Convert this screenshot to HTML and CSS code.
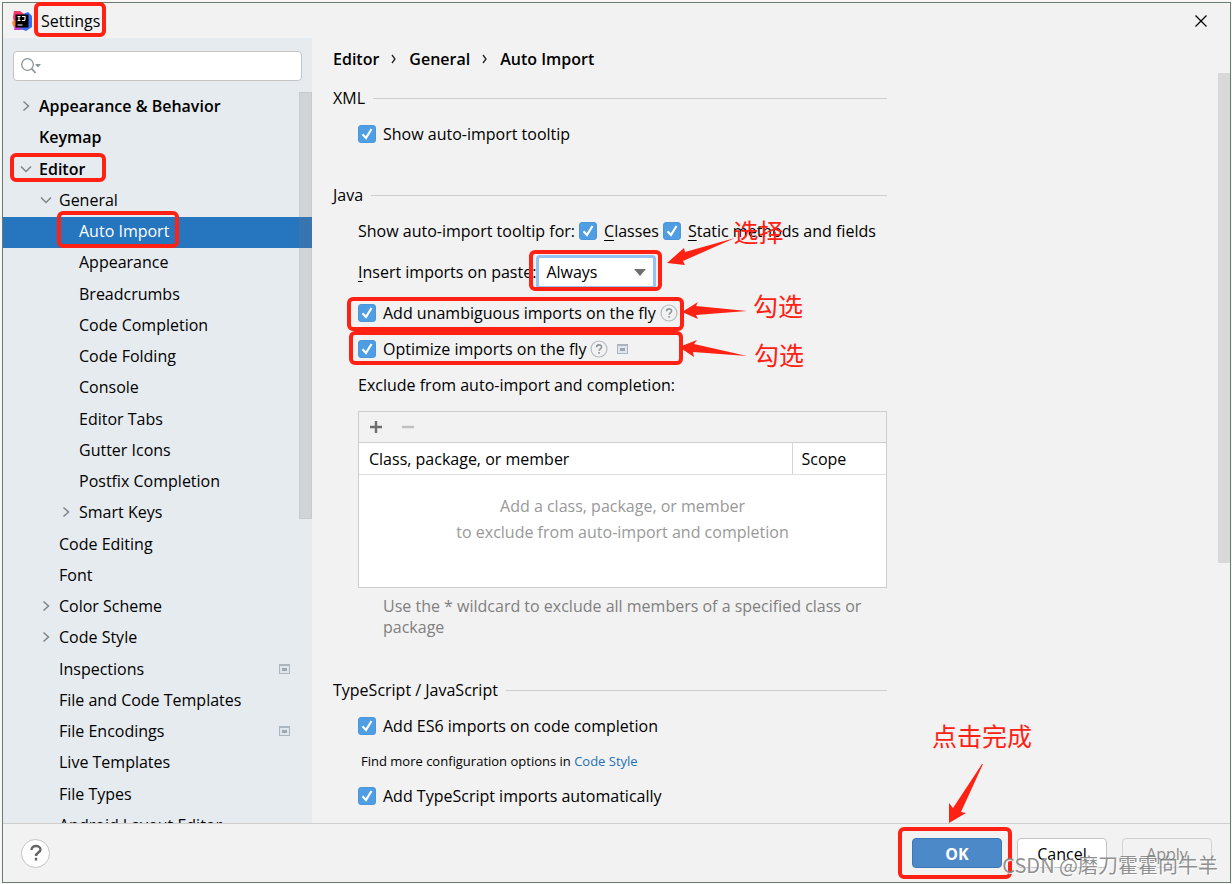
FILE: index.html
```html
<!DOCTYPE html>
<html lang="en">
<head>
    <meta charset="UTF-8">
    <title>Settings</title>
    <link rel="stylesheet" href="styles.css">
</head>

<body>

    <!-- shared icons -->
    <svg class="sprite" aria-hidden="true">
        <symbol id="right" viewBox="0 0 12 12"><path d="M3.500 1.500 8.500 6 3.500 10.500" fill="none" stroke="#7f8488" stroke-width="1.500"/></symbol>
        <symbol id="down" viewBox="0 0 12 12"><path d="M1 3.500 6 8.500 11 3.500" fill="none" stroke="#7f8488" stroke-width="1.500"/></symbol>
        <symbol id="project" viewBox="0 0 11 10"><path d="M0 0h11v10H0z" fill="#aab5bd"/><path d="M1 2h9v7H1z" fill="#dfe5ea"/><path d="M3 4h5v3H3z" fill="#9ba8b1"/></symbol>
        <symbol id="help" viewBox="0 0 18 18"><circle cx="9" cy="9" r="8" fill="none" stroke="#b3bbc0" stroke-width="1.200"/><path d="M6.600 7.200c0-3.200 5-3 5-.2 0 1.800-2.500 1.900-2.500 3.700M9.100 12v1.700" fill="none" stroke="#8f979c" stroke-width="1.600"/></symbol>
    </svg>

    <div class="dialog">
        <header class="titlebar">
            <svg class="logo" viewBox="0 0 20 20">
                <path d="M2 0h6l4 3-2 8-8 2-1-7z" fill="#fc3765"/>
                <path d="m0 11 5-3 3 8-4 2-3-3z" fill="#f98833"/>
                <path d="m3 14 7-3 3 7-5 1-6 0z" fill="#c13fd0"/>
                <path d="m11 3 5-2 4 4v11l-6 4-5-2 2-8z" fill="#3b6cf0"/>
                <path d="M3.500 3.500h13v13h-13z" fill="#000"/>
                <path d="M5.500 5.500h3M7 5.500v4M5.500 9.500h3M10 5.500h3v3q0 1-1.500 1H10M5.500 14h5" fill="none" stroke="#fff" stroke-width="1.100"/>
            </svg>
            <h1 class="title">Settings<span class="ring ring-title"></span></h1>
            <button class="close" aria-label="Close"><svg viewBox="0 0 12 12"><path d="M.5.5l11 11M11.500.5l-11 11" stroke="#000" stroke-width="1.300"/></svg></button>
        </header>

        <div class="body">
            <!-- settings tree -->
            <nav class="sidebar">
                <div class="search">
                    <svg viewBox="0 0 22 18"><circle cx="6.500" cy="7.500" r="5.800" fill="none" stroke="#8a959c" stroke-width="1.300"/><path d="m10.500 11.500 4 4.500" stroke="#8a959c" stroke-width="1.800"/><path d="M14 7h6l-3 3.500z" fill="#8a959c"/></svg>
                    <input type="text" aria-label="Search settings">
                </div>
                <ul class="tree">
                    <li class="top"><svg class="arrow"><use href="#right"/></svg>Appearance &amp; Behavior</li>
                    <li class="top">Keymap</li>
                    <li class="top"><svg class="arrow"><use href="#down"/></svg>Editor<span class="ring ring-editor"></span></li>
                    <li class="mid"><svg class="arrow"><use href="#down"/></svg>General</li>
                    <li class="low selected">Auto Import<span class="ring ring-auto"></span></li>
                    <li class="low">Appearance</li>
                    <li class="low">Breadcrumbs</li>
                    <li class="low">Code Completion</li>
                    <li class="low">Code Folding</li>
                    <li class="low">Console</li>
                    <li class="low">Editor Tabs</li>
                    <li class="low">Gutter Icons</li>
                    <li class="low">Postfix Completion</li>
                    <li class="low"><svg class="arrow"><use href="#right"/></svg>Smart Keys</li>
                    <li class="mid">Code Editing</li>
                    <li class="mid">Font</li>
                    <li class="mid"><svg class="arrow"><use href="#right"/></svg>Color Scheme</li>
                    <li class="mid"><svg class="arrow"><use href="#right"/></svg>Code Style</li>
                    <li class="mid">Inspections<svg class="project"><use href="#project"/></svg></li>
                    <li class="mid">File and Code Templates</li>
                    <li class="mid">File Encodings<svg class="project"><use href="#project"/></svg></li>
                    <li class="mid">Live Templates</li>
                    <li class="mid">File Types</li>
                    <li class="mid">Android Layout Editor</li>
                </ul>
                <div class="scroll scroll-tree"></div>
            </nav>

            <!-- page content -->
            <main class="content">
                <div class="crumbs">
                    <span>Editor</span><svg viewBox="0 0 6 10"><path d="m1 1 3 4-3 4" fill="none" stroke="#222" stroke-width="1.300"/></svg>
                    <span>General</span><svg viewBox="0 0 6 10"><path d="m1 1 3 4-3 4" fill="none" stroke="#222" stroke-width="1.300"/></svg>
                    <span>Auto Import</span>
                </div>

                <section>
                    <h2>XML</h2>
                    <div class="row"><label><input type="checkbox" checked>Show auto-import tooltip</label></div>
                </section>

                <section>
                    <h2>Java</h2>
                    <div class="row row-tight">
                        <span>Show auto-import tooltip for:</span>
                        <label><input type="checkbox" checked><span><u>C</u>lasses</span></label>
                        <label><input type="checkbox" checked><span><u>S</u>tatic methods and fields</span></label>
                    </div>
                    <div class="row row-select">
                        <label for="paste"><span><u>I</u>nsert imports on paste:</span></label>
                        <div class="select">
                            <select id="paste">
                                <option>Always</option>
                                <option>Ask</option>
                                <option>Never</option>
                            </select>
                            <svg class="caret" viewBox="0 0 12 7"><path d="M0 0h12L6 7z" fill="#6e6e6e"/></svg>
                            <span class="ring ring-select"></span>
                            <svg class="pointer pointer-select" viewBox="0 0 70 32"><path d="M69 2 19 16l-1-4L1 27l18 2-2-4z"/></svg>
                            <span class="note note-select">选择</span>
                        </div>
                    </div>
                    <div class="row row-tight">
                        <label><input type="checkbox" checked>Add unambiguous imports on the fly</label>
                        <svg class="help"><use href="#help"/></svg>
                        <span class="ring ring-add"></span>
                        <svg class="pointer pointer-add" viewBox="0 0 68 20"><path d="M66 10 15 5l2-4L1 11l16 7-2-4z"/></svg>
                        <span class="note note-add">勾选</span>
                    </div>
                    <div class="row row-tight">
                        <label><input type="checkbox" checked>Optimize imports on the fly</label>
                        <svg class="help"><use href="#help"/></svg>
                        <svg class="project"><use href="#project"/></svg>
                        <span class="ring ring-optimize"></span>
                        <svg class="pointer pointer-optimize" viewBox="0 0 70 20"><path d="M69 17 16 5l3-4L1 8l15 10-1-5z"/></svg>
                        <span class="note note-optimize">勾选</span>
                    </div>
                    <div class="row">Exclude from auto-import and completion:</div>

                    <div class="exclude">
                        <div class="toolbar">
                            <button aria-label="Add"><svg viewBox="0 0 14 14"><path d="M7 1v12M1 7h12" stroke="#6e6e6e" stroke-width="2.400"/></svg></button>
                            <button aria-label="Remove" disabled><svg viewBox="0 0 14 14"><path d="M1 7h12" stroke="#c0c0c0" stroke-width="2.400"/></svg></button>
                        </div>
                        <table>
                            <thead>
                                <tr><th>Class, package, or member</th><th class="scope">Scope</th></tr>
                            </thead>
                            <tbody>
                                <tr><td colspan="2">Add a class, package, or member<br>to exclude from auto-import and completion</td></tr>
                            </tbody>
                        </table>
                    </div>
                    <p class="hint">Use the * wildcard to exclude all members of a specified class or package</p>
                </section>

                <section>
                    <h2>TypeScript / JavaScript</h2>
                    <div class="row"><label><input type="checkbox" checked>Add ES6 imports on code completion</label></div>
                    <p class="more">Find more configuration options in <a href="#">Code Style</a></p>
                    <div class="row"><label><input type="checkbox" checked>Add TypeScript imports automatically</label></div>
                </section>
                <div class="scroll scroll-content"></div>
            </main>
        </div>

        <footer class="footer">
            <button class="help-btn" aria-label="Help"><svg viewBox="0 0 14 18"><path d="M2.500 6c0-5.500 9-5 9-.5 0 3.200-4.500 3-4.500 6.500M7 13.800v2.600" fill="none" stroke="#666" stroke-width="2.400"/></svg></button>
            <div class="ok">
                <button class="btn primary">OK</button>
                <span class="ring ring-ok"></span>
                <svg class="pointer pointer-ok" viewBox="0 0 36 62"><path d="m35 2-22 48 5 1L1 61V41l4 5L34 2z"/></svg>
                <span class="note note-ok">点击完成</span>
            </div>
            <button class="btn">Cancel</button>
            <button class="btn" disabled>Apply</button>
            <span class="watermark">CSDN @磨刀霍霍向牛羊</span>
        </footer>
    </div>

</body>
</html>
```
FILE: styles.css
```css
* {
    margin: 0;
    padding: 0;
    box-sizing: border-box;
}

body {
    height: 100vh;
    padding: 2px 1px 1px 2px;
    background: #f7f7f7;
    color: #000;
    font: 16px/22px "Open Sans", "Noto Sans CJK SC", sans-serif;
    overflow: hidden;
}

button,
input,
select {
    font: inherit;
    color: inherit;
}

svg {
    display: block;
    flex: none;
}

.sprite {
    display: none;
}

.dialog {
    height: 100%;
    display: flex;
    flex-direction: column;
    background: #f2f2f2;
    border: 1px solid #6b7b6c;
}

/* Title bar */

.titlebar {
    display: flex;
    align-items: center;
    height: 35px;
    padding: 0 23px 0 9px;
}

.logo {
    width: 20px;
    height: 20px;
}

.title {
    position: relative;
    margin-left: 9px;
    font-size: 16px;
    font-weight: normal;
}

.close {
    margin-left: auto;
    border: none;
    background: none;
}

.close svg {
    width: 12px;
    height: 12px;
}

/* Sidebar */

.body {
    flex: 1;
    min-height: 0;
    display: flex;
}

.sidebar {
    position: relative;
    flex: none;
    width: 309px;
    padding-top: 13px;
    background: #e6ebef;
    overflow: hidden;
}

.search {
    display: flex;
    align-items: center;
    height: 30px;
    margin: 0 10px 11px;
    padding-left: 7px;
    background: #fff;
    border: 1px solid #c4c4c4;
    border-radius: 4px;
}

.search svg {
    width: 22px;
    height: 18px;
}

.search input {
    flex: 1;
    min-width: 0;
    border: none;
    outline: none;
    background: none;
}

.tree {
    list-style: none;
}

.tree li {
    position: relative;
    display: flex;
    align-items: center;
    height: 31px;
    padding-bottom: 4px;
    white-space: nowrap;
}

.tree li:nth-child(4n+2) {
    height: 32px;
}

.top {
    padding-left: 36px;
    font-weight: 600;
}

.mid {
    padding-left: 56px;
}

.low {
    padding-left: 76px;
}

.selected {
    background: #2675bf;
    color: #fff;
}

.arrow {
    width: 12px;
    height: 12px;
    margin: 0 7px 0 -19px;
}

.project {
    width: 11px;
    height: 10px;
}

.tree .project {
    margin: 0 22px 0 auto;
}

.scroll {
    position: absolute;
    right: 0;
    background: rgba(120, 120, 120, .2);
}

.scroll-tree {
    top: 54px;
    width: 13px;
    height: 427px;
    border: 1px solid rgba(120, 120, 120, .1);
}

.scroll-content {
    top: 35px;
    width: 12px;
    height: 490px;
}

/* Content */

.content {
    position: relative;
    flex: 1;
    padding: 10px 12px 0 21px;
}

.crumbs {
    display: flex;
    align-items: center;
    gap: 12px;
    margin-bottom: 17px;
    font-weight: 600;
}

.crumbs svg {
    width: 6px;
    height: 10px;
}

section {
    max-width: 554px;
    margin-bottom: 39px;
}

h2 {
    display: flex;
    align-items: center;
    gap: 8px;
    margin-bottom: 14px;
    font-size: 16px;
    font-weight: normal;
}

h2::after {
    content: '';
    flex: 1;
    height: 1px;
    background: #cdcdcd;
}

.row {
    position: relative;
    display: flex;
    align-items: center;
    gap: 8px;
    height: 22px;
    margin: 0 0 14px 25px;
    white-space: nowrap;
}

.row label {
    display: flex;
    align-items: center;
    gap: 7px;
}

.row-tight {
    gap: 4px;
}

.row-tight .project {
    margin-left: 5px;
}

.row-select {
    height: 32px;
    gap: 0;
}

input[type="checkbox"] {
    appearance: none;
    width: 18px;
    height: 18px;
    border: 1px solid #4b97d9;
    border-radius: 3px;
    background: #4f9ee3 url("data:image/svg+xml,%3Csvg xmlns='http://www.w3.org/2000/svg' viewBox='0 0 16 16'%3E%3Cpath d='M3.500 8.200 7 12l5.500-9' fill='none' stroke='%23fff' stroke-width='2.200'/%3E%3C/svg%3E");
}

u {
    text-underline-offset: 3px;
}

.help {
    width: 18px;
    height: 18px;
}

.select {
    position: relative;
}

.select select {
    appearance: none;
    display: block;
    width: 120px;
    height: 34px;
    padding-left: 7px;
    background: #fff;
    border: 3px solid #97c3f3;
    border-radius: 4px;
    outline: none;
}

.caret {
    position: absolute;
    right: 10px;
    top: 14px;
    width: 12px;
    height: 7px;
    pointer-events: none;
}

/* Exclude table */

.exclude {
    margin: 15px 0 8px 25px;
    border: 1px solid #cdcdcd;
    background: #fff;
}

.toolbar {
    display: flex;
    align-items: center;
    gap: 18px;
    height: 31px;
    padding-left: 10px;
    background: #f2f2f2;
    border-bottom: 1px solid #cdcdcd;
}

.toolbar button {
    border: none;
    background: none;
}

.toolbar svg {
    width: 14px;
    height: 14px;
}

table {
    width: 100%;
    border-collapse: collapse;
}

th {
    height: 31px;
    padding: 2px 0 0 10px;
    border-bottom: 1px solid #e0e0e0;
    font-weight: normal;
    text-align: left;
}

.scope {
    width: 94px;
    padding-left: 9px;
    border-left: 1px solid #d5d5d5;
}

td {
    height: 113px;
    padding-top: 18px;
    color: #999;
    line-height: 26px;
    text-align: center;
    vertical-align: top;
}

.hint {
    margin: 0 25px 41px 50px;
    color: #808080;
    line-height: 21px;
}

.more {
    margin: 0 0 13px 28px;
    font-size: 13px;
    line-height: 21px;
}

.more a {
    color: #2470b3;
    text-decoration: none;
}

/* Footer */

.footer {
    position: relative;
    display: flex;
    align-items: center;
    gap: 15px;
    height: 59px;
    padding: 0 18px;
    border-top: 1px solid #cfcfcf;
}

.help-btn {
    display: flex;
    align-items: center;
    justify-content: center;
    width: 29px;
    height: 29px;
    background: #fff;
    border: 1px solid #c4c4c4;
    border-radius: 50%;
}

.help-btn svg {
    width: 14px;
    height: 18px;
}

.ok {
    position: relative;
    margin-left: auto;
}

.btn {
    display: block;
    width: 90px;
    height: 30px;
    padding-top: 2px;
    background: #fff;
    border: 1px solid #c4c4c4;
    border-radius: 4px;
}

.btn:disabled {
    background: #f2f2f2;
    border-color: #d0d0d0;
    color: #8c8c8c;
}

.primary {
    background: #4c89c8;
    border-color: #3d77b5;
    color: #fff;
    font-weight: bold;
}

/* Red annotations lying over the dialog */

.ring {
    position: absolute;
    border: 4px solid #ff2113;
    border-radius: 6px;
    pointer-events: none;
}

.pointer {
    position: absolute;
    fill: #ff2113;
    pointer-events: none;
}

.note {
    position: absolute;
    color: #ff2113;
    font: 25px/30px "Noto Sans CJK SC", sans-serif;
    white-space: nowrap;
}

.ring-title {
    inset: -8px -6px -5px -7px;
}

.ring-editor {
    left: 7px;
    top: -2px;
    width: 96px;
    height: 29px;
}

.ring-auto {
    left: 54px;
    top: -6px;
    width: 122px;
    height: 37px;
}

.ring-select {
    inset: -5px -6px -2px -7px;
}

.pointer-select {
    left: 130px;
    top: -19px;
    width: 70px;
    height: 32px;
}

.note-select {
    left: 197px;
    top: -39px;
}

.ring-add {
    left: -11px;
    top: -5px;
    width: 337px;
    height: 34px;
}

.pointer-add {
    left: 323px;
    top: -1px;
    width: 68px;
    height: 20px;
}

.note-add {
    left: 395px;
    top: -12px;
}

.ring-optimize {
    left: -9px;
    top: -7px;
    width: 334px;
    height: 34px;
}

.pointer-optimize {
    left: 320px;
    top: 1px;
    width: 70px;
    height: 20px;
}

.note-optimize {
    left: 396px;
    top: 1px;
}

.ring-ok {
    inset: -11px -10px -11px -14px;
}

.pointer-ok {
    left: 36px;
    top: -76px;
    width: 36px;
    height: 62px;
}

.note-ok {
    left: 20px;
    top: -118px;
}

.watermark {
    position: absolute;
    right: 12px;
    bottom: 2px;
    color: rgba(125, 125, 125, .85);
    font: 20px/30px "Noto Sans CJK SC", sans-serif;
    text-shadow: 1px 1px 1px #fff;
    white-space: nowrap;
    pointer-events: none;
}
```
